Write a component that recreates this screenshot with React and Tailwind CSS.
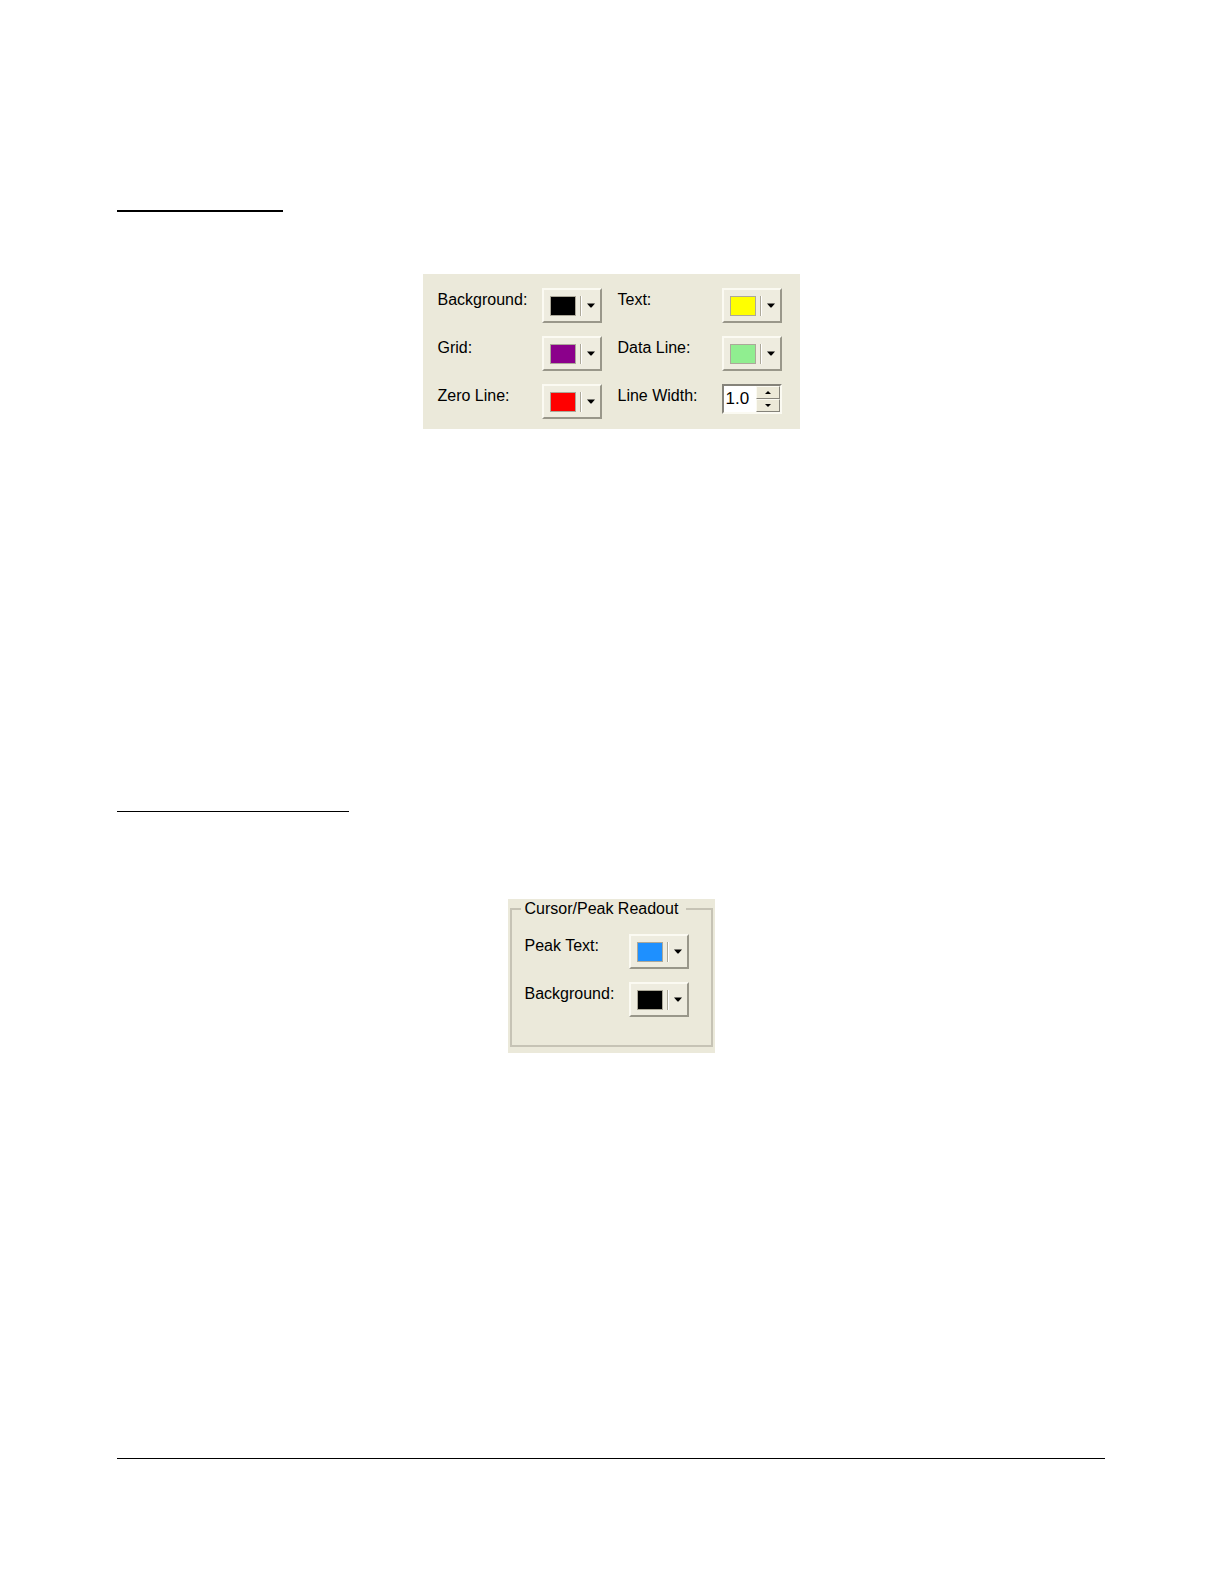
import { useState } from "react";

const displayColors = [
  { id: "background", label: "Background:", color: "#000000" },
  { id: "text", label: "Text:", color: "#ffff00" },
  { id: "grid", label: "Grid:", color: "#8b008b" },
  { id: "data-line", label: "Data Line:", color: "#90ee90" },
  { id: "zero-line", label: "Zero Line:", color: "#ff0000" },
];

const readoutColors = [
  { id: "peak-text", label: "Peak Text:", color: "#1e90ff" },
  { id: "readout-background", label: "Background:", color: "#000000" },
];

function ColorButton({ id, color }) {
  return (
    <button
      id={id}
      type="button"
      className="flex h-[35px] w-[60px] items-center border-2 border-t-[#fbfaf2] border-r-[#99978a] border-b-[#99978a] border-l-[#fbfaf2] bg-[#eeecdf] pl-1.5"
    >
      <span
        className="h-5 w-[26px] border border-[#aca899]"
        style={{ backgroundColor: color }}
      />
      <span className="ml-1 h-5 w-0.5 border-r border-l border-r-white border-l-[#aca899]" />
      <svg width="8" height="5" viewBox="0 0 8 5" className="ml-[5px]">
        <path d="M0 0.5h8L4.5 4.5h-1z" fill="#000" />
      </svg>
    </button>
  );
}

function ColorField({ id, label, color }) {
  return (
    <div className="flex items-start">
      <label htmlFor={id} className="w-[104px] leading-6">
        {label}
      </label>
      <ColorButton id={id} color={color} />
    </div>
  );
}

function SpinButton({ label, path, onClick }) {
  return (
    <button
      type="button"
      aria-label={label}
      onClick={onClick}
      className="flex flex-1 items-center justify-center border border-t-[#fbfaf2] border-r-[#85837a] border-b-[#85837a] border-l-[#fbfaf2] bg-[#ece9d8]"
    >
      <svg width="6" height="3" viewBox="0 0 6 3">
        <path d={path} fill="#000" />
      </svg>
    </button>
  );
}

function LineWidthField() {
  const [width, setWidth] = useState(1);

  return (
    <div className="flex items-start">
      <label htmlFor="line-width" className="w-[104px] leading-6">
        Line Width:
      </label>
      <div className="flex h-[30px] w-[60px] border-2 border-t-[#85837a] border-r-[#fbfaf2] border-b-[#fbfaf2] border-l-[#85837a] bg-white">
        <input
          id="line-width"
          type="text"
          value={width.toFixed(1)}
          readOnly
          className="w-0 flex-1 pl-0.5 text-[17px] leading-5 outline-none"
        />
        <div className="flex w-6 flex-col">
          <SpinButton
            label="Increase line width"
            path="M3 0L6 3H0z"
            onClick={() => setWidth(width + 0.5)}
          />
          <SpinButton
            label="Decrease line width"
            path="M0 0h6L3 3z"
            onClick={() => setWidth(Math.max(0.5, width - 0.5))}
          />
        </div>
      </div>
    </div>
  );
}

function App() {
  return (
    <main className="flex flex-col bg-white pt-[210px] pr-[119px] pb-[125px] pl-[117px] font-['Liberation_Sans',Arial,sans-serif] text-base text-black">
      <hr className="w-[166px] border-t-2 border-black" />

      {/* Display colors */}
      <section className="mt-[62px] grid grid-cols-[auto_auto] gap-x-4 gap-y-[13px] self-center bg-[#ebe9da] pt-3.5 pr-[18px] pb-2.5 pl-[15px]">
        {displayColors.map((field) => (
          <ColorField key={field.id} {...field} />
        ))}
        <LineWidthField />
      </section>

      <hr className="mt-[382px] w-[232px] border-t border-black" />

      {/* Readout colors */}
      <section className="mt-[87px] self-center bg-[#ebe9da] px-0.5 pb-1.5">
        <fieldset className="border-2 border-[#c6c3b5] pr-[22px] pb-7 pl-[13px]">
          <legend className="-ml-1 pr-2 pl-1 leading-5">
            Cursor/Peak Readout
          </legend>
          <div className="mt-[15px] flex flex-col gap-[13px]">
            {readoutColors.map((field) => (
              <ColorField key={field.id} {...field} />
            ))}
          </div>
        </fieldset>
      </section>

      <hr className="mt-[405px] border-t border-black" />
    </main>
  );
}

export default App;
